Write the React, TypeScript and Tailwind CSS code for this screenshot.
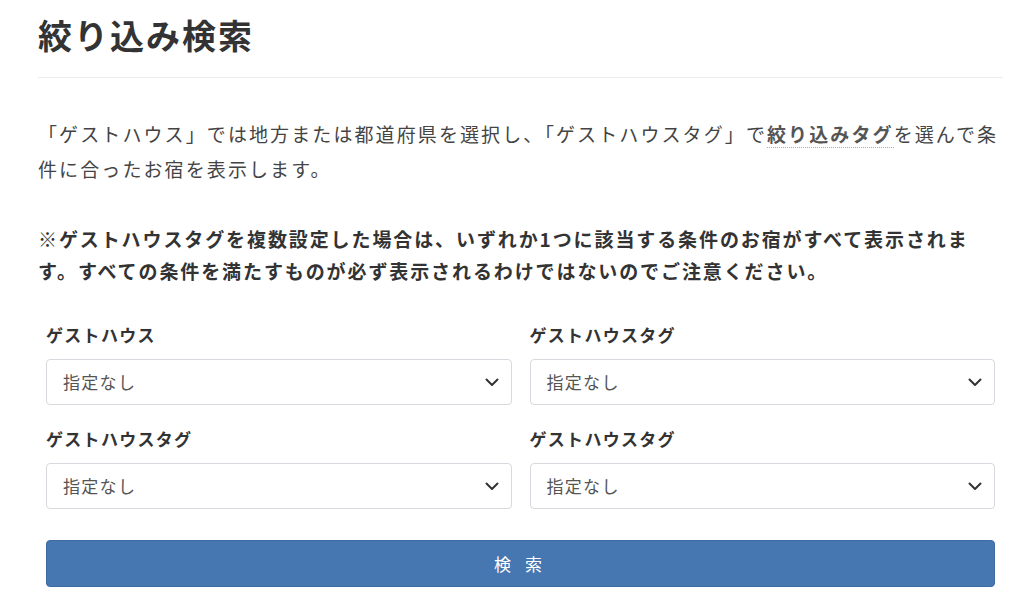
const FONT = "font-['Noto_Sans_CJK_JP','Noto_Sans',sans-serif]";

interface SelectFieldProps {
  label: string;
}

const SelectField = ({ label }: SelectFieldProps) => {
  return (
    <div className="flex flex-col">
      <label className="text-[17px] leading-[24px] font-bold tracking-[1.3px] text-[#333] mb-[12px]">
        {label}
      </label>
      <div className="h-[46px] flex items-center justify-between border border-[#d6d9dd] rounded-[4px] bg-white pl-[16px] pr-[12px]">
        <span className="text-[17px] tracking-[1.3px] text-[#555]">指定なし</span>
        <svg width="14" height="9" viewBox="0 0 14 9" fill="none">
          <path d="M1.5 1.5l5.5 5.5 5.5-5.5" stroke="#333" strokeWidth="2" strokeLinecap="round" strokeLinejoin="round" />
        </svg>
      </div>
    </div>
  );
};

export default function App() {
  return (
    <div className={`${FONT} w-[1024px] h-[610px] bg-white text-[#333] pl-[38px] pr-[21px] pt-[12px] overflow-hidden`}>
      <h1 className="text-[34px] leading-[46px] font-bold tracking-[2px] text-[#333] pb-[19px] border-b border-[#ececec]">
        絞り込み検索
      </h1>

      <p className="mt-[38px] text-[19px] leading-[35px] tracking-[2.1px] text-[#444]">
        「ゲストハウス」では地方または都道府県を選択し、「ゲストハウスタグ」で
        <span className="font-bold text-[#555] border-b border-dotted border-[#aaa]">絞り込みタグ</span>
        を選んで条
        <br />
        件に合ったお宿を表示します。
      </p>

      <p className="mt-[37px] text-[19px] leading-[32px] tracking-[1.9px] font-bold text-[#333]">
        ※ゲストハウスタグを複数設定した場合は、いずれか1つに該当する条件のお宿がすべて表示されま
        <br />
        す。すべての条件を満たすものが必ず表示されるわけではないのでご注意ください。
      </p>

      <form className="mt-[36px] px-[8px]">
        <div className="grid grid-cols-2 gap-x-[18px] gap-y-[22px]">
          <SelectField label="ゲストハウス" />
          <SelectField label="ゲストハウスタグ" />
          <SelectField label="ゲストハウスタグ" />
          <SelectField label="ゲストハウスタグ" />
        </div>
        <button
          type="button"
          className="mt-[31px] w-full h-[47px] bg-[#4677b0] border border-[#3d6aa0] rounded-[4px] text-white text-[17px] tracking-[5px]"
        >
          検 索
        </button>
      </form>
    </div>
  );
}
